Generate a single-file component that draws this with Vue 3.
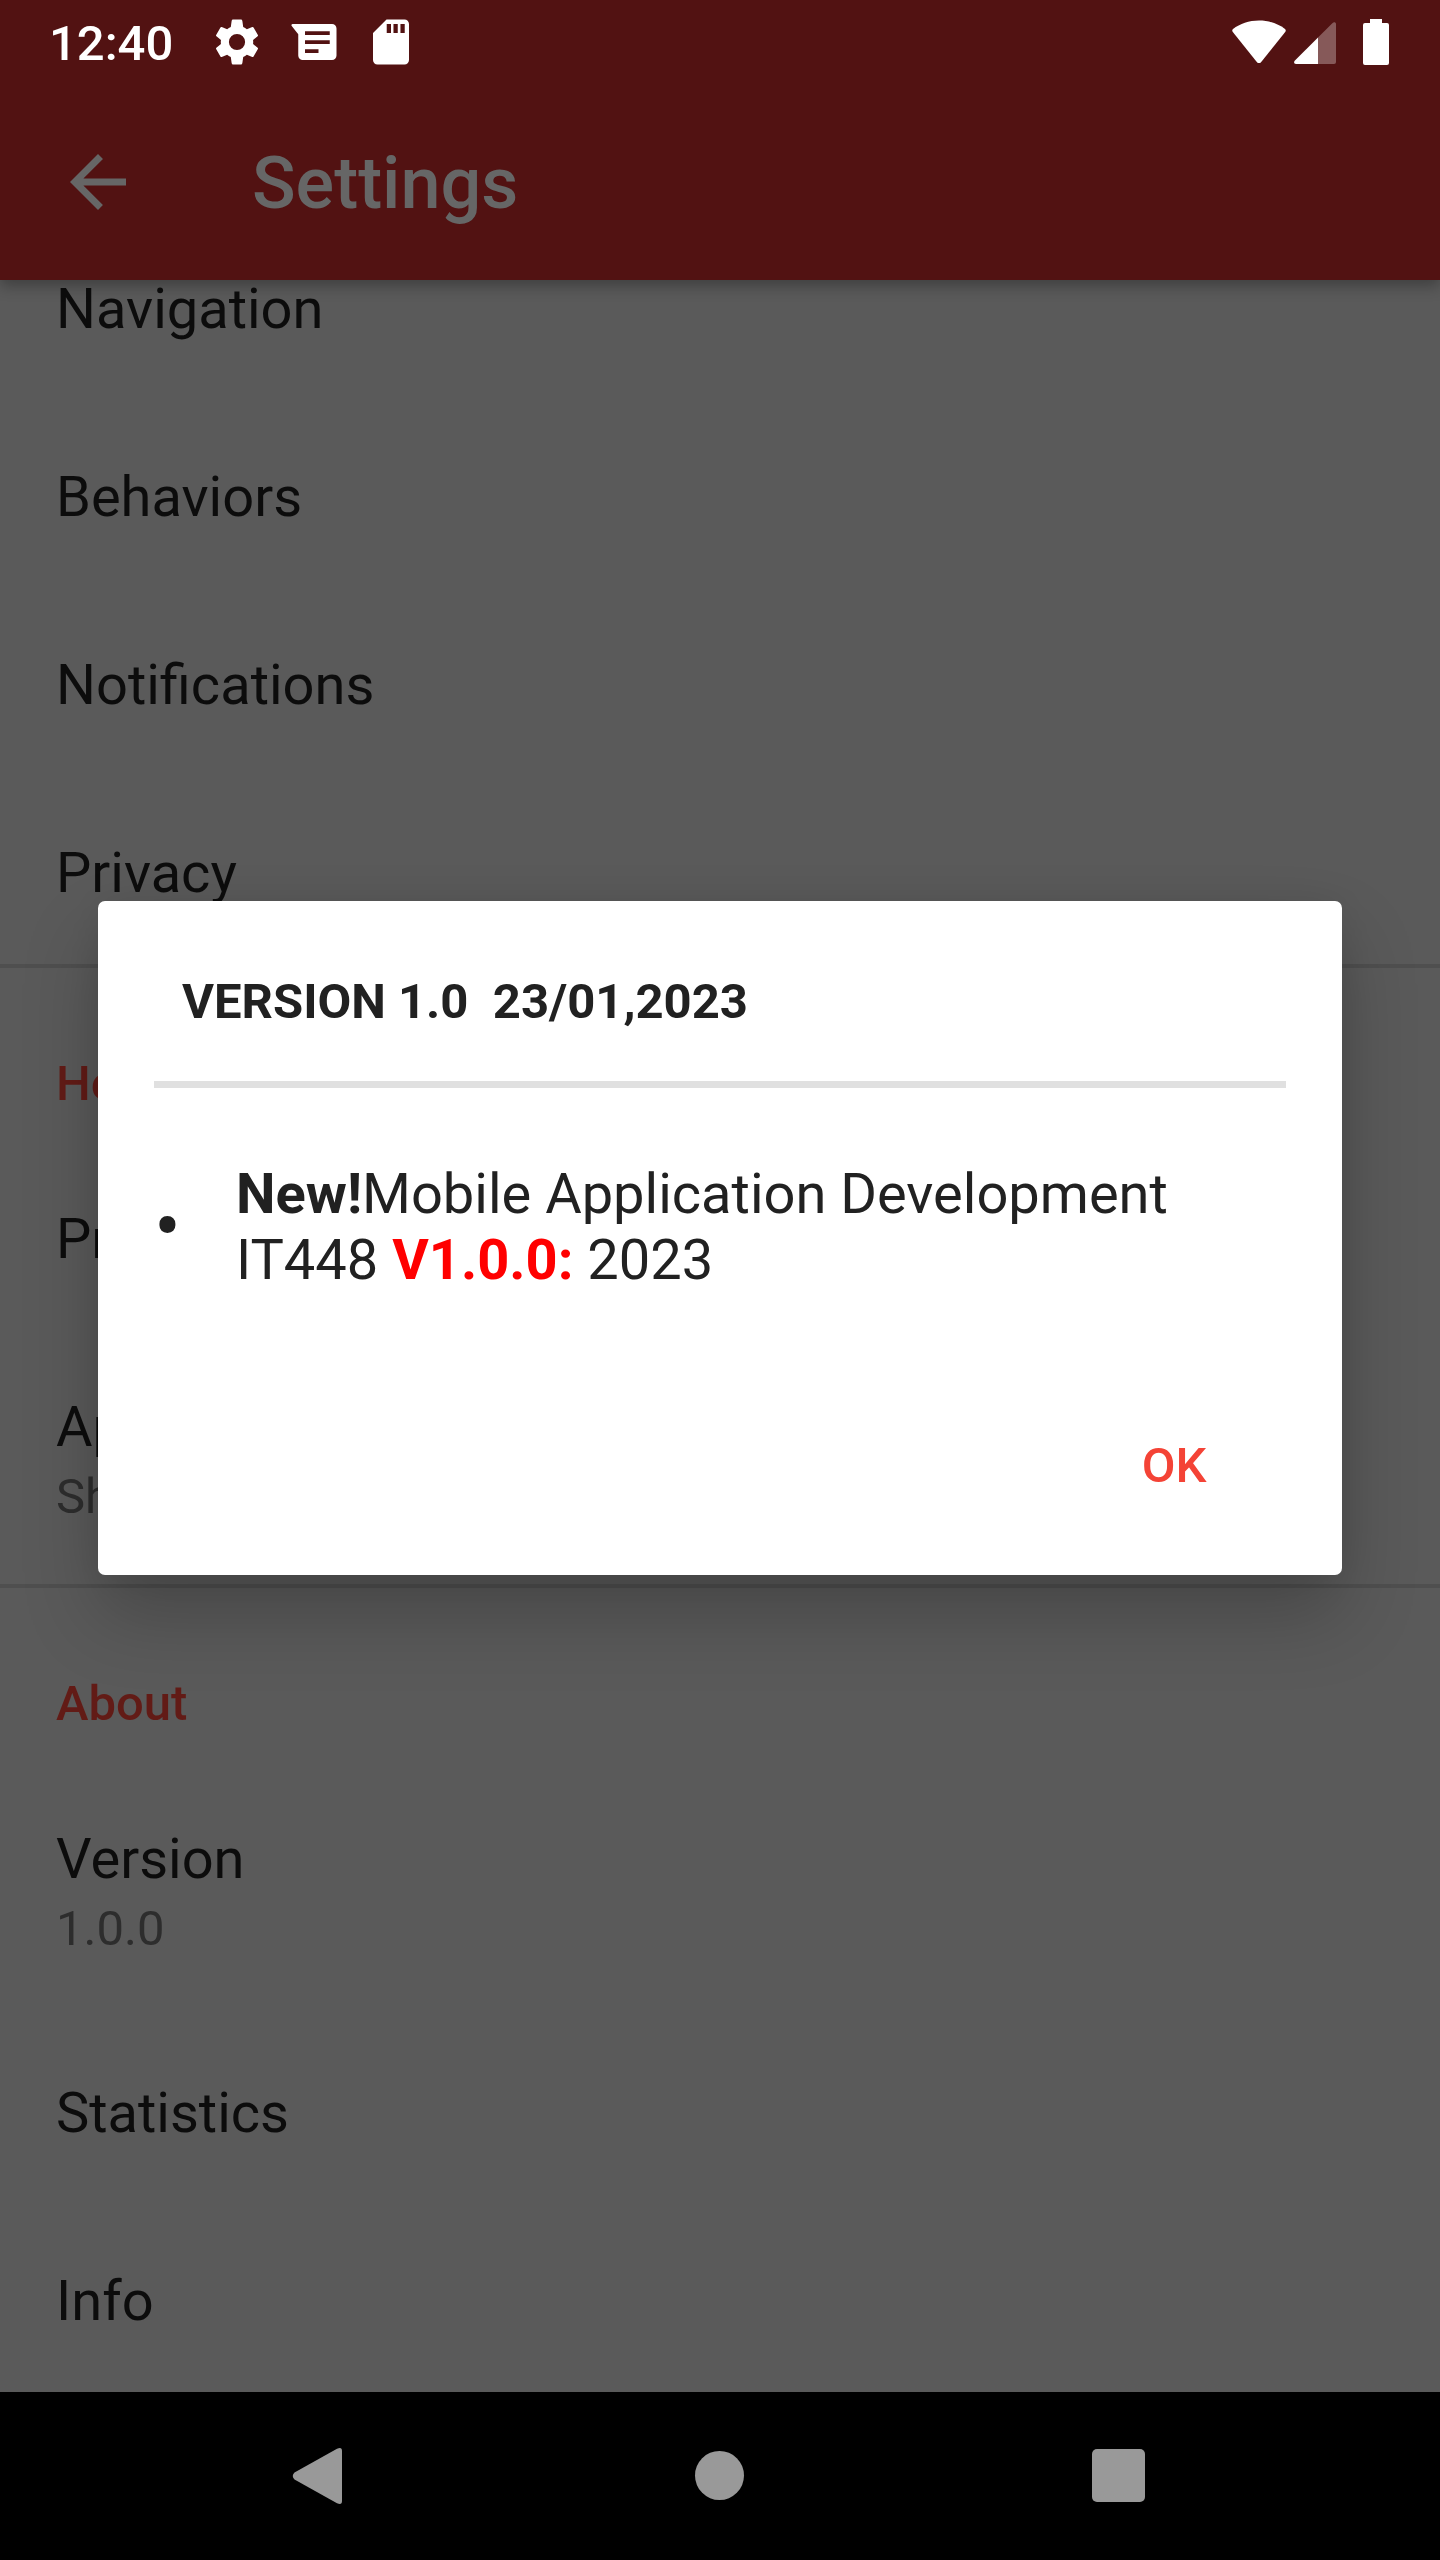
<script setup>
import { ref } from 'vue'

const sections = [
  {
    rows: [
      { title: 'Navigation' },
      { title: 'Behaviors' },
      { title: 'Notifications' },
      { title: 'Privacy' },
    ],
  },
  {
    heading: 'Help',
    rows: [{ title: 'Privacy' }, { title: 'App', summary: 'Share' }],
  },
  {
    heading: 'About',
    rows: [
      { title: 'Version', summary: '1.0.0' },
      { title: 'Statistics' },
      { title: 'Info' },
    ],
  },
]

const dialogOpen = ref(true)
</script>

<template>
  <div class="screen">
    <header class="top">
      <div class="status">
        <time class="clock">12:40</time>
        <div class="notices">
          <svg class="notice" viewBox="0 0 24 24" aria-hidden="true">
            <path d="M19.14 12.94c.04-.3.06-.61.06-.94 0-.32-.02-.64-.07-.94l2.03-1.58c.18-.14.23-.41.12-.61l-1.92-3.32c-.12-.22-.37-.29-.59-.22l-2.39.96c-.5-.38-1.03-.7-1.62-.94L14.4 2.81c-.04-.24-.14-.81-.5-.81h-3.8c-.36 0-.46.57-.5.81l-.36 2.54c-.59.24-1.13.57-1.62.94l-2.39-.96c-.22-.08-.47 0-.59.22L2.74 8.87c-.12.21-.08.47.12.61l2.03 1.58c-.05.3-.09.63-.09.94s.02.64.07.94l-2.03 1.58c-.18.14-.23.41-.12.61l1.92 3.32c.12.22.37.29.59.22l2.39-.96c.5.38 1.03.7 1.62.94l.36 2.54c.04.24.14.81.5.81h3.8c.36 0 .46-.57.5-.81l.36-2.54c.59-.24 1.13-.56 1.62-.94l2.39.96c.22.08.47 0 .59-.22l1.92-3.32c.12-.22.07-.47-.12-.61l-2.01-1.58zM12 15.6A3.6 3.6 0 1 1 12 8.400a3.6 3.6 0 0 1 0 7.200z" />
          </svg>
          <svg class="notice" viewBox="0 0 24 24" aria-hidden="true">
            <path fill-rule="evenodd" d="M2.500 4H20a2 2 0 0 1 2 2v12a2 2 0 0 1-2 2H7a2 2 0 0 1-2-2V8.500L2.100 4.900C1.800 4.500 2 4 2.500 4zM8 7.200v1.700h11V7.200zM8 11.200v1.700h11v-1.700zM8 15.200v1.700h6v-1.700z" />
          </svg>
          <svg class="notice" viewBox="0 0 24 24" aria-hidden="true">
            <path fill-rule="evenodd" d="M18 2h-8L4 8v12c0 1.100.9 2 2 2h12c1.100 0 2-.9 2-2V4c0-1.100-.9-2-2-2zM10.100 4h1.900v4h-1.900zM13.100 4h1.900v4h-1.900zM16.200 4h1.900v4h-1.900z" />
          </svg>
        </div>
        <div class="signals">
          <svg class="wifi" viewBox="0 0 54 44" aria-hidden="true">
            <path d="M27 0.500C17 0.500 8 3.700 1 9C0 9.800 0 11 0.800 12L25 42.200C26 43.400 28 43.400 29 42.200L53.200 12C54 11 54 9.800 53 9C46 3.700 37 0.500 27 0.500z" />
          </svg>
          <svg class="cell" viewBox="0 0 42 42" aria-hidden="true">
            <path opacity=".3" d="M24 15.500L38.600 0.900C40 -.4 42 .3 42 2V40a2 2 0 0 1-2 2H24z" />
            <path d="M24 15.500V42H2C0 42 -.4 40 .7 38.700z" />
          </svg>
          <svg class="battery" viewBox="0 0 26 46" aria-hidden="true">
            <path d="M7 0h12v4h5a2 2 0 0 1 2 2v38a2 2 0 0 1-2 2H2a2 2 0 0 1-2-2V6a2 2 0 0 1 2-2h5z" />
          </svg>
        </div>
      </div>
      <div class="toolbar">
        <button class="back" type="button" aria-label="Back">
          <svg viewBox="0 0 24 24" aria-hidden="true">
            <path d="M20 11H7.830l5.590-5.590L12 4l-8 8 8 8 1.410-1.410L7.830 13H20v-2z" />
          </svg>
        </button>
        <h1 class="title">Settings</h1>
      </div>
    </header>

    <main class="settings">
      <section v-for="(section, i) in sections" :key="i" class="section">
        <h2 v-if="section.heading" class="heading">{{ section.heading }}</h2>
        <ul class="rows">
          <li v-for="row in section.rows" :key="row.title" class="row">
            <div class="row-title">{{ row.title }}</div>
            <div v-if="row.summary" class="row-summary">{{ row.summary }}</div>
          </li>
        </ul>
      </section>
    </main>

    <nav class="navbar" aria-label="System">
      <button type="button" aria-label="Back">
        <svg viewBox="0 0 98 98" aria-hidden="true">
          <path d="M23.500 45.500L66 21.800Q71 19.500 71 24V74Q71 78.500 66 76.200L23.500 52.500Q20 49 23.500 45.500z" />
        </svg>
      </button>
      <button type="button" aria-label="Home">
        <svg viewBox="0 0 98 98" aria-hidden="true"><circle cx="48.500" cy="48.500" r="24.500" /></svg>
      </button>
      <button type="button" aria-label="Recent apps">
        <svg viewBox="0 0 98 98" aria-hidden="true"><rect x="21" y="22" width="53" height="53" rx="5" /></svg>
      </button>
    </nav>

    <div v-if="dialogOpen" class="overlay">
      <div class="dialog" role="dialog" aria-modal="true" aria-labelledby="release">
        <h2 id="release" class="release">VERSION 1.0&nbsp; 23/01,2023</h2>
        <hr class="rule" />
        <div class="change">
          <span class="bullet">•</span>
          <p class="change-text">
            <b>New!</b>Mobile Application Development IT448 <b class="tag">V1.0.0:</b> 2023
          </p>
        </div>
        <button class="ok" type="button" @click="dialogOpen = false">OK</button>
      </div>
    </div>
  </div>
</template>

<style>
body {
  margin: 0;
  background: #5a5a5a;
}
</style>

<style scoped>
.screen {
  display: flex;
  flex-direction: column;
  height: 100vh;
  background: #5a5a5a;
  color: #0c0c0c;
  font-family: Roboto, "Liberation Sans", sans-serif;
  font-size: 56px;
  line-height: 66px;
}

h1,
h2,
p,
ul {
  margin: 0;
  padding: 0;
}

button {
  padding: 0;
  border: 0;
  background: none;
  font-family: inherit;
}

svg {
  display: block;
  fill: currentColor;
}

.top {
  position: relative;
  z-index: 1;
  flex: none;
  background: #521212;
  box-shadow: 0 6px 14px rgba(0, 0, 0, 0.3);
}

.status {
  display: flex;
  align-items: center;
  height: 84px;
  padding: 0 51px 0 49px;
  color: #fff;
}

.clock {
  width: 161px;
  padding-top: 4px;
  font-size: 49px;
  font-weight: 500;
  line-height: 58px;
}

.notices {
  display: flex;
  gap: 23px;
}

.notice {
  width: 54px;
  height: 54px;
}

.signals {
  display: flex;
  align-items: center;
  margin-left: auto;
}

.wifi {
  width: 54px;
  height: 44px;
}

.cell {
  width: 42px;
  height: 42px;
  margin: 2px 27px 0 8px;
}

.battery {
  width: 26px;
  height: 46px;
}

.toolbar {
  display: flex;
  align-items: center;
  gap: 112px;
  height: 196px;
  padding: 0 56px;
  color: #666;
}

.back {
  width: 84px;
  height: 84px;
  color: inherit;
}

.title {
  padding-top: 4px;
  font-size: 72px;
  font-weight: 500;
  line-height: 84px;
}

/* The list is scrolled to its end, so it hangs from the bottom edge. */
.settings {
  display: flex;
  flex: 1;
  flex-direction: column;
  justify-content: flex-end;
  min-height: 0;
  overflow: hidden;
}

.section {
  flex: none;
}

.section + .section {
  border-top: 4px solid #4f4f4f;
}

.heading {
  padding: 87px 56px 29px;
  color: #621b16;
  font-size: 49px;
  font-weight: 500;
  line-height: 58px;
}

.rows {
  list-style: none;
}

.row {
  padding: 64px 56px 58px;
}

.row-summary {
  margin-top: 8px;
  color: #2d2d2d;
  font-size: 49px;
  line-height: 58px;
}

.navbar {
  display: flex;
  flex: none;
  align-items: center;
  justify-content: space-around;
  height: 168px;
  padding: 0 120px;
  background: #000;
}

.navbar button {
  width: 98px;
  height: 98px;
  color: #999;
}

.overlay {
  position: fixed;
  inset: 84px 0 168px;
  z-index: 2;
  display: flex;
  align-items: center;
  padding: 0 98px;
}

.dialog {
  display: flex;
  flex: 1;
  flex-direction: column;
  padding: 72px 56px 46px;
  border-radius: 7px;
  background: #fff;
  box-shadow: 0 40px 76px rgba(0, 0, 0, 0.22), 0 0 40px rgba(0, 0, 0, 0.08);
  color: #212121;
}

.release {
  padding: 0 28px;
  font-size: 49px;
  font-weight: 700;
  line-height: 58px;
}

.rule {
  width: 100%;
  height: 7px;
  margin: 50px 0 73px;
  border: 0;
  background: #e0e0e0;
}

.change {
  display: flex;
  align-items: center;
}

.bullet {
  flex: none;
  width: 82px;
  font-size: 80px;
}

.ok {
  align-self: flex-end;
  min-width: 224px;
  height: 126px;
  margin-top: 110px;
  color: #f44336;
  font-size: 49px;
  font-weight: 500;
  line-height: 58px;
}

.tag {
  color: #f00;
}
</style>
